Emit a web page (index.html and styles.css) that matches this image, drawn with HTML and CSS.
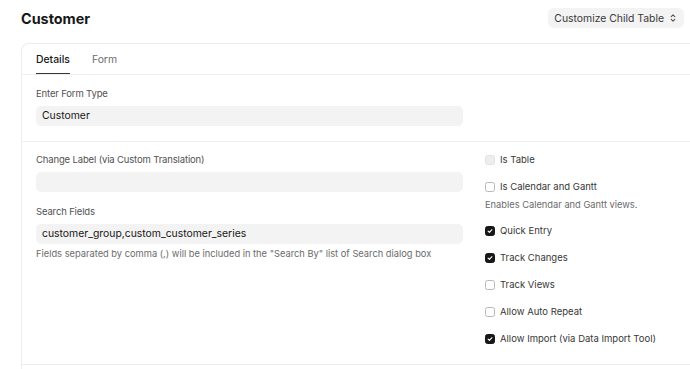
FILE: index.html
```html
<!DOCTYPE html>
<html lang="en">
<head>
    <meta charset="UTF-8">
    <meta name="viewport" content="width=device-width, initial-scale=1.0">
    <title>Customize Form | Customer</title>
    <link rel="stylesheet" href="styles.css">
</head>
<body>
    <div class="page">
        <header class="page-head">
            <h1 class="page-title">Customer</h1>
            <button class="btn-select" type="button">
                <span>Customize Child Table</span>
                <svg class="updown" width="8" height="10" viewBox="0 0 8 10" fill="none" stroke="currentColor" stroke-width="1.1" stroke-linecap="round" stroke-linejoin="round">
                    <path d="M2.2 3.6 L4 1.9 L5.8 3.6"/>
                    <path d="M2.2 6.4 L4 8.1 L5.8 6.4"/>
                </svg>
            </button>
        </header>

        <div class="form-card">
            <nav class="form-tabs">
                <a class="tab active">Details</a>
                <a class="tab">Form</a>
            </nav>

            <section class="form-section first">
                <div class="section-cols">
                    <div class="col">
                        <div class="field">
                            <label class="field-label">Enter Form Type</label>
                            <div class="control">Customer</div>
                        </div>
                    </div>
                    <div class="col"></div>
                </div>
            </section>

            <section class="form-section second">
                <div class="section-cols">
                    <div class="col">
                        <div class="field">
                            <label class="field-label">Change Label (via Custom Translation)</label>
                            <div class="control"></div>
                        </div>
                        <div class="field">
                            <label class="field-label">Search Fields</label>
                            <div class="control">customer_group,custom_customer_series</div>
                            <p class="help">Fields separated by comma (,) will be included in the "Search By" list of Search dialog box</p>
                        </div>
                    </div>
                    <div class="col">
                        <div class="check disabled"><span class="box"></span>Is Table</div>
                        <div class="check with-help">
                            <span class="box"></span>Is Calendar and Gantt
                        </div>
                        <p class="help check-help">Enables Calendar and Gantt views.</p>
                        <div class="check on"><span class="box"></span>Quick Entry</div>
                        <div class="check on"><span class="box"></span>Track Changes</div>
                        <div class="check"><span class="box"></span>Track Views</div>
                        <div class="check"><span class="box"></span>Allow Auto Repeat</div>
                        <div class="check on"><span class="box"></span>Allow Import (via Data Import Tool)</div>
                    </div>
                </div>
            </section>

            <section class="form-section third"></section>
        </div>
    </div>
</body>
</html>
```

FILE: styles.css
```css
:root {
    --text-color: #171717;
    --label-color: #525252;
    --muted: #6b6b6b;
    --border: #ededed;
    --control-bg: #f3f3f3;
}

html, body {
    margin: 0;
    padding: 0;
    overflow: hidden;
}

body {
    font-family: Inter, 'Noto Sans', sans-serif;
    color: var(--text-color);
    background: #fff;
}

.page {
    padding-left: 21px;
}

.page-head {
    display: flex;
    align-items: center;
    justify-content: space-between;
    height: 20px;
    padding: 8px 6px 0 0;
}

.page-title {
    margin: 0;
    font-size: 14.4px;
    font-weight: 700;
}

.btn-select {
    display: inline-flex;
    align-items: center;
    gap: 5px;
    height: 20px;
    padding: 0 7px 0 6px;
    border: none;
    border-radius: 6px;
    background: var(--control-bg);
    color: #383838;
    font-family: inherit;
    font-size: 10.4px;
}

.updown {
    color: #525252;
}

.form-card {
    margin-top: 15px;
    border: 1px solid var(--border);
    border-right: none;
    border-radius: 8px 0 0 0;
}

.form-tabs {
    display: flex;
    gap: 22px;
    height: 30px;
    padding: 0 14px;
    border-bottom: 1px solid var(--border);
}

.tab {
    display: flex;
    align-items: center;
    padding-top: 2px;
    font-size: 10.4px;
    color: #6b6b6b;
    border-bottom: 1.5px solid transparent;
}

.tab.active {
    color: var(--text-color);
    font-weight: 500;
    border-bottom-color: #383838;
}

.form-section {
    padding: 12px 14px 15px;
    border-bottom: 1px solid var(--border);
}

.form-section.second {
    padding-top: 11px;
    padding-bottom: 5px;
}

.form-section.third {
    height: 4px;
    padding: 0;
    border-bottom: none;
}

.section-cols {
    display: grid;
    grid-template-columns: 427px 1fr;
    gap: 22px;
}

.field + .field {
    margin-top: 13px;
}

.field-label {
    display: block;
    line-height: 14px;
    margin-bottom: 5px;
    font-size: 9.5px;
    letter-spacing: -0.15px;
    color: var(--label-color);
}

.control {
    height: 20px;
    line-height: 20px;
    padding: 0 6px;
    border-radius: 5px;
    background: var(--control-bg);
    font-size: 10.4px;
    color: var(--text-color);
}

.help {
    margin: 3px 0 0;
    line-height: 14px;
    font-size: 9.3px;
    color: var(--muted);
}

.check {
    display: flex;
    align-items: center;
    gap: 5px;
    line-height: 14px;
    margin-bottom: 13px;
    font-size: 9.5px;
    color: #383838;
}

.check .box {
    width: 8px;
    height: 8px;
    border: 1px solid #b8b8b8;
    border-radius: 2.5px;
    background: #fff;
    flex: none;
}

.check.disabled .box {
    border-color: #e2e2e2;
    background: #ededed;
}

.check.on .box {
    border-color: #171717;
    background: #171717 url("data:image/svg+xml;utf8,<svg xmlns='http://www.w3.org/2000/svg' viewBox='0 0 10 10'><path d='M2.6 5.2 L4.3 6.8 L7.4 3.4' fill='none' stroke='white' stroke-width='1.4' stroke-linecap='round' stroke-linejoin='round'/></svg>") center / 100% no-repeat;
}

.check.with-help {
    margin-bottom: 0;
}

.check-help {
    margin: 4px 0 12px;
}
```
